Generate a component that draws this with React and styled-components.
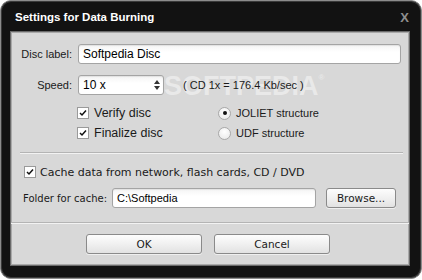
import React from 'react';
import styled, { createGlobalStyle } from 'styled-components';

const GlobalStyle = createGlobalStyle`
  html, body {
    margin: 0;
    padding: 0;
    background: #ffffff;
  }
  body {
    font-family: "Liberation Sans", Arial, sans-serif;
  }
`;

const Window = styled.div`
  box-sizing: border-box;
  width: 422px;
  height: 279px;
  background: #121212;
  border: 1px solid #8c8c8c;
  border-radius: 11px;
  box-shadow: inset 0 0 0 1px #3a3a3a;
  display: flex;
  flex-direction: column;
`;

const TitleBar = styled.div`
  height: 30px;
  display: flex;
  align-items: center;
  justify-content: space-between;
  padding: 2px 12px 0 14px;
  box-sizing: border-box;
`;

const Title = styled.span`
  color: #ffffff;
  font-weight: bold;
  font-size: 11.5px;
`;

const Close = styled.span`
  color: #8e8e8e;
  font-size: 13px;
  font-weight: bold;
  font-family: "Liberation Sans", Arial, sans-serif;
`;

const Panel = styled.div`
  position: relative;
  box-sizing: border-box;
  margin: 0 11px 0 9px;
  height: 235px;
  background: #d8d8d8;
  border: 1px solid #6a6a6a;
  box-shadow: inset 0 0 0 1px #a9a9a9;
  display: flex;
  flex-direction: column;
`;

const Watermark = styled.div`
  position: absolute;
  left: 153px;
  top: 39px;
  font-size: 27px;
  font-weight: bold;
  color: rgba(255, 255, 255, 0.45);
  pointer-events: none;
  sup {
    font-size: 8px;
    vertical-align: top;
    position: relative;
    top: 2px;
  }
`;

const TopSection = styled.div`
  position: relative;
  padding: 12px 8px 0 0;
  height: 120px;
  box-sizing: border-box;
  display: grid;
  grid-template-columns: 61px 1fr;
  column-gap: 6px;
  grid-auto-rows: min-content;
  row-gap: 11px;
  font-size: 11px;
  color: #1a1a1a;
`;

const Label = styled.label`
  text-align: right;
  align-self: center;
  font-size: 11px;
`;

const TextField = styled.div`
  box-sizing: border-box;
  height: 20px;
  width: ${p => p.$width || 'auto'};
  background: linear-gradient(#f4f4f4, #ffffff 40%, #ffffff);
  border: 1px solid #a4a4a4;
  border-radius: 3px;
  box-shadow: inset 0 1px 1px rgba(0, 0, 0, 0.08);
  display: flex;
  align-items: center;
  padding-left: 4px;
  font-family: "Liberation Sans", Arial, sans-serif;
  font-size: ${p => p.$size || '11.5px'};
  color: #000;
`;

const SpeedRow = styled.div`
  display: flex;
  align-items: center;
  gap: 19px;
`;

const Select = styled(TextField)`
  justify-content: space-between;
  padding-right: 2px;
`;

const Hint = styled.span`
  font-size: 11px;
  color: #1a1a1a;
`;

const OptionGrid = styled.div`
  grid-column: 2;
  display: grid;
  grid-template-columns: 141px 1fr;
  row-gap: 8px;
  margin-left: -1px;
  margin-top: 1px;
`;

const Option = styled.div`
  display: flex;
  align-items: center;
  gap: ${p => p.$gap || '5px'};
  height: 12px;
  font-family: ${p => p.$font || '"Liberation Sans", Arial, sans-serif'};
  font-size: ${p => p.$size || '11px'};
  color: #1a1a1a;
  white-space: nowrap;
`;

const Box = styled.span`
  box-sizing: border-box;
  width: 12px;
  height: 12px;
  background: #ffffff;
  border: 1px solid #9a9a9a;
  display: inline-flex;
  align-items: center;
  justify-content: center;
  flex: none;
`;

const Radio = styled.span`
  box-sizing: border-box;
  width: 13px;
  height: 13px;
  border-radius: 50%;
  background: radial-gradient(circle at 50% 35%, #ffffff, #e6e6e6);
  border: 1px solid #a8a8a8;
  display: inline-flex;
  align-items: center;
  justify-content: center;
  flex: none;
  &::after {
    content: '';
    display: ${p => (p.$on ? 'block' : 'none')};
    width: 4px;
    height: 4px;
    border-radius: 50%;
    background: #111;
  }
`;

const Separator = styled.div`
  height: 0;
  border-top: 1px solid #b4b4b4;
  border-bottom: 1px solid #f2f2f2;
  margin: ${p => p.$inset || '0'};
`;

const CacheSection = styled.div`
  height: 68px;
  box-sizing: border-box;
  padding: 12px 12px 0 13px;
  display: flex;
  flex-direction: column;
  gap: 10px;
  font-family: "DejaVu Sans", sans-serif;
  color: #1a1a1a;
`;

const FolderRow = styled.div`
  display: flex;
  align-items: center;
  gap: 5px;
  margin-left: -1px;
  font-size: 10px;
  white-space: nowrap;
`;

const Button = styled.button`
  box-sizing: border-box;
  width: ${p => p.$width || '116px'};
  height: 20px;
  margin-left: ${p => p.$offset || '0'};
  border: 1px solid #8a8a8a;
  border-radius: 3px;
  background: linear-gradient(#fdfdfd, #f0f0f0 50%, #e2e2e2);
  box-shadow: 0 1px 0 rgba(255, 255, 255, 0.6);
  font-family: "DejaVu Sans", sans-serif;
  font-size: 10.5px;
  color: #1a1a1a;
  padding: 0;
  cursor: pointer;
`;

const ButtonRow = styled.div`
  display: flex;
  justify-content: center;
  gap: 12px;
  padding: 10px 0 0 0;
  margin-left: -4px;
`;

const Check = () => (
  <Box>
    <svg width="8" height="8" viewBox="0 0 8 8">
      <path d="M1 4 L3 6 L7 1.5" fill="none" stroke="#111" strokeWidth="1.5" />
    </svg>
  </Box>
);

const Spinner = () => (
  <svg width="8" height="14" viewBox="0 0 8 14">
    <path d="M4 2 L7 6 L1 6 Z" fill="#333" />
    <path d="M4 12 L7 8 L1 8 Z" fill="#333" />
  </svg>
);

export default function App() {
  return (
    <>
      <GlobalStyle />
      <Window>
        <TitleBar>
          <Title>Settings for Data Burning</Title>
          <Close>X</Close>
        </TitleBar>
        <Panel>
          <Watermark>
            SOFTPEDIA<sup>®</sup>
          </Watermark>
          <TopSection>
            <Label>Disc label:</Label>
            <TextField $size="12px">Softpedia Disc</TextField>
            <Label>Speed:</Label>
            <SpeedRow>
              <Select $width="86px" $size="12px">
                10 x
                <Spinner />
              </Select>
              <Hint>( CD 1x = 176.4 Kb/sec )</Hint>
            </SpeedRow>
            <OptionGrid>
              <Option $size="12.5px">
                <Check />
                Verify disc
              </Option>
              <Option>
                <Radio $on />
                JOLIET structure
              </Option>
              <Option $size="12.5px">
                <Check />
                Finalize disc
              </Option>
              <Option>
                <Radio />
                UDF structure
              </Option>
            </OptionGrid>
          </TopSection>
          <Separator $inset="0 6px 0 9px" />
          <CacheSection>
            <Option $size="11px" $gap="4px" $font='"DejaVu Sans", sans-serif'>
              <Check />
              Cache data from network, flash cards, CD / DVD
            </Option>
            <FolderRow>
              Folder for cache:
              <TextField $width="204px" $size="11px">
                C:\Softpedia
              </TextField>
              <Button $width="70px" $offset="5px">Browse...</Button>
            </FolderRow>
          </CacheSection>
          <Separator />
          <ButtonRow>
            <Button>OK</Button>
            <Button>Cancel</Button>
          </ButtonRow>
        </Panel>
      </Window>
    </>
  );
}
